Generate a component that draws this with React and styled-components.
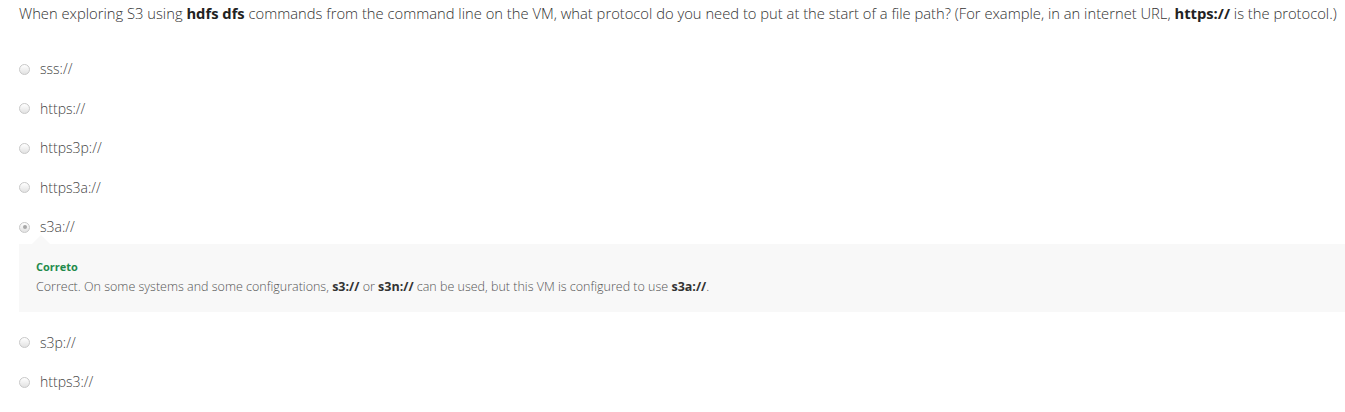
import styled, { createGlobalStyle } from 'styled-components';

const GlobalStyle = createGlobalStyle`
    body {
        margin: 0;
        background: #FFFFFF;
        font-family: "Open Sans", "Noto Sans", sans-serif;
        color: #333333;
    }
`

const options = [
    { id: 1, label: "sss://" },
    { id: 2, label: "https://" },
    { id: 3, label: "https3p://" },
    { id: 4, label: "https3a://" },
    { id: 5, label: "s3a://", checked: true, feedback: true },
    { id: 6, label: "s3p://" },
    { id: 7, label: "https3://" },
];

function Feedback() {
    return (
        <FeedbackBox>
            <FeedbackTitle>Correto</FeedbackTitle>
            <FeedbackText>
                Correct. On some systems and some configurations, <b>s3://</b> or <b>s3n://</b> can
                be used, but this VM is configured to use <b>s3a://</b>.
            </FeedbackText>
        </FeedbackBox>
    );
}

function Option({ label, checked, feedback }) {
    return (
        <OptionItem>
            <OptionRow>
                <Radio checked={checked} />
                <Label>{label}</Label>
            </OptionRow>
            {feedback && <Feedback />}
        </OptionItem>
    );
}

export default function App() {
    return (
        <>
            <GlobalStyle />
            <Page>
                <Question>
                    When exploring S3 using <b>hdfs dfs</b> commands from the command line on the VM, what
                    protocol do you need to put at the start of a file path? (For example, in an internet
                    URL, <b>https://</b> is the protocol.)
                </Question>
                <OptionList>
                    {options.map(option =>
                        <Option
                            key={option.id}
                            label={option.label}
                            checked={option.checked}
                            feedback={option.feedback}
                        />
                    )}
                </OptionList>
            </Page>
        </>
    );
}

const Page = styled.div`
    padding: 3px 0 0 19px;
    font-size: 14px;
    font-weight: 300;
`

const Question = styled.p`
    margin: 0 0 36px;
    font-size: 14.75px;
    line-height: 20px;
    color: #333333;
    white-space: nowrap;

    b {
        font-weight: 700;
        color: #222222;
    }
`

const OptionList = styled.div`
    display: flex;
    flex-direction: column;
    gap: 19.5px;
`

const OptionItem = styled.div`
    display: flex;
    flex-direction: column;
`

const OptionRow = styled.div`
    display: flex;
    align-items: center;
    gap: 10px;
    height: 20px;
`

const Radio = styled.span`
    width: 9px;
    height: 9px;
    border-radius: 50%;
    border: 1px solid #C8C8C8;
    background: linear-gradient(#FFFFFF, #E2E2E2);
    display: flex;
    align-items: center;
    justify-content: center;

    &::after {
        content: "";
        width: 4px;
        height: 4px;
        border-radius: 50%;
        background: #A8A8A8;
        display: ${props => props.checked ? "block" : "none"};
    }
`

const Label = styled.span`
    color: #444444;
    line-height: 20px;
`

const FeedbackBox = styled.div`
    position: relative;
    margin-top: 7px;
    margin-bottom: 1px;
    background: #F8F8F8;
    padding: 15px 17px 15px;

    &::before {
        content: "";
        position: absolute;
        top: -9px;
        left: 13px;
        border-left: 9px solid transparent;
        border-right: 9px solid transparent;
        border-bottom: 9px solid #F8F8F8;
    }
`

const FeedbackTitle = styled.div`
    font-size: 11px;
    font-weight: 700;
    line-height: 16px;
    margin-bottom: 2px;
    color: #1F8A4C;
`

const FeedbackText = styled.div`
    font-size: 12.5px;
    line-height: 20px;
    color: #555555;

    b {
        font-weight: 700;
        color: #333333;
    }
`
